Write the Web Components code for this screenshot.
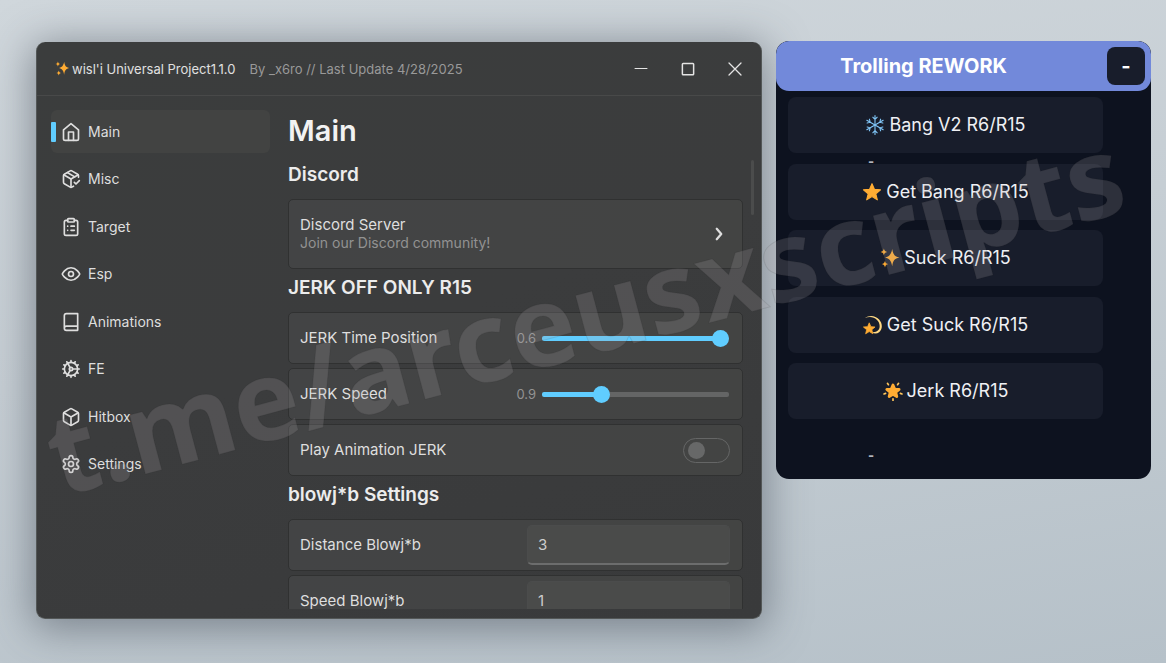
<!DOCTYPE html>
<html lang="en">
<head>
<meta charset="utf-8">
<meta name="viewport" content="width=device-width, initial-scale=1">
<title>wisl'i Universal Project</title>
<style>
html,body{margin:0;min-height:100%}
body{font-family:Inter,"Open Sans",sans-serif;color:#e4e4e4;background:linear-gradient(170deg,#d0d7dc 0%,#c6ced4 45%,#b6c1c9 100%) fixed}
</style>
</head>
<body>
<desk-top></desk-top>
<script>
const BASE='*{box-sizing:border-box}button,input{font:inherit;color:inherit;margin:0}';
const define=(name,render,attach)=>customElements.define(name,class extends HTMLElement{
  connectedCallback(){
    if(this.shadowRoot)return;
    const root=this.attachShadow({mode:'open'});
    root.innerHTML='<style>'+BASE+'</style>'+render(this);
    if(attach)attach(root,this);
  }
});

const LINE={
home:'<path d="m3 9.500 9-7.500 9 7.500V20a2 2 0 0 1-2 2H5a2 2 0 0 1-2-2z"/><path d="M9 22V12h6v10"/>',
package:'<path d="m16 16 2 2 4-4"/><path d="M21 10V8a2 2 0 0 0-1-1.730l-7-4a2 2 0 0 0-2 0l-7 4A2 2 0 0 0 3 8v8a2 2 0 0 0 1 1.730l7 4a2 2 0 0 0 2 0l2-1.140"/><path d="m7.500 4.270 9 5.150"/><path d="M3.290 7 12 12l8.710-5"/><path d="M12 22V12"/>',
clipboard:'<rect x="8" y="2" width="8" height="4" rx="1"/><path d="M16 4h2a2 2 0 0 1 2 2v14a2 2 0 0 1-2 2H6a2 2 0 0 1-2-2V6a2 2 0 0 1 2-2h2"/><path d="M12 11h4M12 16h4M8 11h.01M8 16h.01"/>',
eye:'<path d="M1.500 12s3.700-7.500 10.500-7.500S22.500 12 22.500 12s-3.700 7.500-10.500 7.500S1.500 12 1.500 12Z"/><circle cx="12" cy="12" r="3"/>',
book:'<path d="M4 19.500V4.500A2.500 2.500 0 0 1 6.500 2H20v20H6.500a2.500 2.500 0 0 1 0-5H20"/>',
cog:'<circle cx="12" cy="12" r="8"/><circle cx="12" cy="12" r="2"/><path d="M12 2v2M12 22v-2M17 20.660l-1-1.730M11 10.270 7 3.340M20.660 17l-1.730-1M3.340 7l1.730 1M14 12h8M2 12h2M20.660 7l-1.730 1M3.340 17l1.730-1M17 3.340l-1 1.730M11 13.730l-4 6.930"/>',
box:'<path d="M21 8a2 2 0 0 0-1-1.730l-7-4a2 2 0 0 0-2 0l-7 4A2 2 0 0 0 3 8v8a2 2 0 0 0 1 1.730l7 4a2 2 0 0 0 2 0l7-4A2 2 0 0 0 21 16Z"/><path d="m3.300 7 8.700 5 8.700-5M12 22V12"/>',
settings:'<path d="M12.220 2h-.44a2 2 0 0 0-2 2v.18a2 2 0 0 1-1 1.730l-.43.25a2 2 0 0 1-2 0l-.15-.08a2 2 0 0 0-2.730.73l-.22.38a2 2 0 0 0 .73 2.730l.15.1a2 2 0 0 1 1 1.720v.51a2 2 0 0 1-1 1.740l-.15.09a2 2 0 0 0-.73 2.730l.22.38a2 2 0 0 0 2.730.73l.15-.08a2 2 0 0 1 2 0l.43.25a2 2 0 0 1 1 1.730V20a2 2 0 0 0 2 2h.44a2 2 0 0 0 2-2v-.18a2 2 0 0 1 1-1.730l.43-.25a2 2 0 0 1 2 0l.15.08a2 2 0 0 0 2.730-.73l.22-.39a2 2 0 0 0-.73-2.730l-.15-.08a2 2 0 0 1-1-1.740v-.5a2 2 0 0 1 1-1.740l.15-.09a2 2 0 0 0 .73-2.730l-.22-.38a2 2 0 0 0-2.730-.73l-.15.08a2 2 0 0 1-2 0l-.43-.25a2 2 0 0 1-1-1.730V4a2 2 0 0 0-2-2z"/><circle cx="12" cy="12" r="3"/>',
minus:'<path d="M4 11.300h16"/>',
square:'<rect x="4.500" y="4.500" width="15" height="15" rx="1"/>',
close:'<path d="m4 4 16 16M20 4 4 20"/>',
chevron:'<path d="m9 5 6 7-6 7"/>'
};
define('line-icon',el=>`<style>:host{display:block;flex:none;width:20px;height:20px}svg{display:block;width:100%;height:100%}</style>
<svg viewBox="0 0 24 24" fill="none" stroke="currentColor" stroke-width="${el.getAttribute('weight')||2}" stroke-linecap="round" stroke-linejoin="round" aria-hidden="true">${LINE[el.getAttribute('name')]}</svg>`);

const STAR='m18 3 4.300 10.200 11.100.9-8.500 7.200 2.700 10.800L18 26.300l-9.600 5.800 2.700-10.800-8.500-7.200 11.100-.9z';
const arms=(n)=>Array.from({length:n},(_,i)=>`<use href="#arm" transform="rotate(${i*360/n} 18 18)"/>`).join('');
const EMOJI={
sparkles:'<g fill="#ffac33"><path d="M22 2c1.500 10 4 13 13 15-9 2-11.500 5-13 16-2-11-5-14-13-16 8-2 11-5 13-15Z"/><path d="M7 1c1 4 2 5 6 6-4 1-5 2-6 6C6 9 5 8 1 7c4-1 5-2 6-6ZM9 23c1 4 2 5 6 6-4 1-5 2-6 6-1-4-2-5-6-6 4-1 5-2 6-6Z"/></g>',
snow:`<defs><path id="arm" d="M18 18V1M14 4l4 4 4-4M18 8v3" fill="none" stroke="#7fc4f5" stroke-width="2" stroke-linecap="round"/></defs>${arms(6)}`,
star:`<path fill="#ffac33" stroke="#ffac33" stroke-width="2" stroke-linejoin="round" d="${STAR}"/>`,
dizzy:`<path fill="#ffd983" d="M3 6C12-1 22 1 29 8c7 8 6 18 0 23-4 3-9 3-13 0 8 1 14-3 14-11C30 8 16-1 3 6Z"/><path fill="#ffac33" stroke="#ffac33" stroke-width="2" stroke-linejoin="round" d="${STAR}" transform="translate(-1 12) scale(.68)"/>`,
glow:`<defs><path id="arm" d="M18 4V1" stroke="#ffc65c" stroke-width="3" stroke-linecap="round"/></defs><g transform="rotate(36 18 18)">${arms(5)}</g><path fill="#ffac33" stroke="#ffac33" stroke-width="7" stroke-linejoin="round" d="${STAR}" transform="translate(5 5) scale(.72)"/>`
};
define('emoji-icon',el=>`<style>:host{display:block;flex:none;width:var(--emoji,20px);height:var(--emoji,20px)}svg{display:block;width:100%;height:100%}</style><svg viewBox="0 0 36 36" aria-hidden="true">${EMOJI[el.getAttribute('name')]}</svg>`);

define('nav-item',el=>`<style>:host{display:block}
a{display:flex;align-items:center;gap:7px;height:43px;border-radius:6px;color:#dedede;text-decoration:none;font-size:14px;line-height:20px}
a::before{content:"";width:5px;height:20px;margin-right:-2px;border-radius:1px}
:host([active]) a{background:#424342}:host([active]) a::before{background:#60cdff}</style>
<a href="#"><line-icon name="${el.getAttribute('icon')}"></line-icon><span><slot></slot></span></a>`);

define('title-bar',()=>`<style>:host{box-sizing:border-box;display:flex;align-items:center;height:54px;padding:0 17px 0 18px;border-bottom:1px solid #484949;font-size:13px;line-height:20px;white-space:nowrap;--emoji:15px}
.name{margin-left:2px;color:#e0e0e0}.by{margin-left:14px;color:#999;flex:1}
nav{display:flex;gap:29px}button{width:18px;height:18px;padding:0;border:0;background:none}line-icon{width:18px;height:18px}</style>
<emoji-icon name="sparkles"></emoji-icon><span class="name">wisl'i Universal Project1.1.0</span><span class="by">By _x6ro // Last Update 4/28/2025</span>
<nav><button aria-label="Minimize"><line-icon name="minus" weight="1.4"></line-icon></button><button aria-label="Maximize"><line-icon name="square"></line-icon></button><button aria-label="Close"><line-icon name="close" weight="1.700"></line-icon></button></nav>`);

const CARD=`:host{display:block;margin-bottom:4px}
.card{display:flex;align-items:center;justify-content:space-between;width:100%;height:52px;padding:0 12px 0 11px;border:1px solid #303131;border-radius:5px;background:linear-gradient(90deg,#434445,#434443);font-size:15px;line-height:18px;text-align:left;color:#dedede}`;
define('section-title',()=>`<style>:host{display:block}h2{margin:0;padding:5px 0 10px;font-size:19px;line-height:28px;font-weight:600;color:#ececec}</style><h2><slot></slot></h2>`);
define('link-card',el=>`<style>${CARD}:host{margin-bottom:0}.card{height:70px}small{display:block;font-size:14px;color:#929292}line-icon{width:18px;height:18px;margin-right:2px}</style>
<button class="card"><span><slot></slot><small>${el.getAttribute('note')}</small></span><line-icon name="chevron" weight="3"></line-icon></button>`);
define('slider-card',el=>`<style>${CARD}
.card{padding-right:13px}.control{display:flex;align-items:center;gap:6px;flex:0 0 50%;justify-content:flex-end}output{font-size:13px;color:#939393}
input{appearance:none;width:187px;height:18px;background:none;--p:50%}
input::-webkit-slider-runnable-track{height:5px;border-radius:2px;background:linear-gradient(90deg,#60cdff var(--p),#646565 var(--p))}
input::-webkit-slider-thumb{appearance:none;width:17px;height:17px;margin-top:-6px;border-radius:50%;background:#60cdff}</style>
<div class="card"><label for="r">${el.getAttribute('label')}</label><div class="control"><output for="r">${el.getAttribute('value')}</output><input id="r" type="range" min="0" max="${el.getAttribute('max')}" step="0.01" value="${el.getAttribute('value')}"></div></div>`,
root=>{const input=root.querySelector('input'),out=root.querySelector('output');
const fill=()=>input.style.setProperty('--p',(input.value/input.max*90+5)+'%');
input.addEventListener('input',()=>{out.value=+input.value;fill()});fill()});
define('toggle-card',el=>`<style>${CARD}:host{margin-bottom:0}
input{appearance:none;display:flex;align-items:center;width:47px;height:25px;padding:0 4px;border:1px solid #656666;border-radius:13px}
input::before{content:"";width:17px;height:17px;border-radius:50%;background:#676868}input:checked{justify-content:flex-end}</style>
<div class="card"><label for="t">${el.getAttribute('label')}</label><input id="t" type="checkbox" role="switch"></div>`);
define('field-card',el=>`<style>${CARD}
input{width:203px;height:40px;padding:0 10px;border:1px solid #4b4c4c;border-bottom:2px solid #6c6d6d;border-radius:5px;background:#4a4b4a;color:#cdcdcd}</style>
<div class="card"><label for="f">${el.getAttribute('label')}</label><input id="f" type="text" value="${el.getAttribute('value')}"></div>`);

define('hub-window',()=>`<style>
:host{box-sizing:border-box;display:flex;flex-direction:column;height:calc(100vh - 86px);border:1px solid #535757;border-top:0;border-radius:9px;background:linear-gradient(160deg,#3b3d3d,#3b3c3d 50%,#393a3b);box-shadow:0 6px 40px 4px #3a424d80;overflow:hidden}
.body{flex:1;min-height:0;display:grid;grid-template-columns:219px minmax(0,1fr);column-gap:18px;padding:0 7px 9px 14px}
nav{display:flex;flex-direction:column;justify-content:space-between;height:376px;margin-top:14px}
main{min-height:0;overflow:hidden;padding-right:8px}
h1{margin:15px 0 5px;font-size:29px;line-height:40px;font-weight:600;color:#f2f2f2}
.pane{display:grid;grid-template-columns:minmax(0,1fr) 3px;min-height:0}
.bar{height:55px;margin-top:64px;border-radius:2px;background:#4b4c4c}
</style>
<title-bar></title-bar>
<div class="body"><nav>
<nav-item icon="home" active>Main</nav-item><nav-item icon="package">Misc</nav-item><nav-item icon="clipboard">Target</nav-item><nav-item icon="eye">Esp</nav-item><nav-item icon="book">Animations</nav-item><nav-item icon="cog">FE</nav-item><nav-item icon="box">Hitbox</nav-item><nav-item icon="settings">Settings</nav-item></nav>
<div class="pane"><main><h1>Main</h1>
<section-title>Discord</section-title><link-card note="Join our Discord community!">Discord Server</link-card>
<section-title>JERK OFF ONLY R15</section-title>
<slider-card label="JERK Time Position" value="0.6" max="0.6"></slider-card>
<slider-card label="JERK Speed" value="0.9" max="3"></slider-card>
<toggle-card label="Play Animation JERK"></toggle-card>
<section-title>blowj*b Settings</section-title>
<field-card label="Distance Blowj*b" value="3"></field-card><field-card label="Speed Blowj*b" value="1"></field-card>
</main><div class="bar"></div></div></div>`);

define('action-button',el=>`<style>:host{display:block}button{display:flex;align-items:center;justify-content:center;gap:4px;width:100%;height:56px;padding:0;border:0;border-radius:8px;background:#181d2b;color:#eff0f4;font-size:18px;line-height:24px;font-weight:400;white-space:nowrap}</style>
<button><emoji-icon name="${el.getAttribute('icon')}"></emoji-icon><span><slot></slot></span></button>`);
define('action-panel',()=>`<style>
:host{display:block;height:438px;border-radius:13px;background:#0d121f;overflow:hidden}
header{display:flex;align-items:center;justify-content:space-between;height:50px;padding-right:6px;border-radius:13px;background:#7289da}
h2{flex:0 0 80%;margin:0;text-align:center;font-size:20px;line-height:28px;font-weight:700;color:#fff}
header button{width:38px;height:38px;padding:0;border:0;border-radius:8px;background:#181d2b;color:#fff;font-size:20px;font-weight:700}
.list{position:relative;display:flex;flex-direction:column;justify-content:space-between;width:84%;height:322px;margin:6px 0 0 12px}
.tick{color:#b0b4bd;font-size:13px;line-height:16px;font-weight:800}
.list .tick{position:absolute;left:80px;top:56px}
footer{padding:28px 0 0 92px}
</style>
<header><h2>Trolling REWORK</h2><button aria-label="Collapse">-</button></header>
<div class="list"><action-button icon="snow">Bang V2 R6/R15</action-button><action-button icon="star">Get Bang R6/R15</action-button><action-button icon="sparkles">Suck R6/R15</action-button><action-button icon="dizzy">Get Suck R6/R15</action-button><action-button icon="glow">Jerk R6/R15</action-button><span class="tick">-</span></div>
<footer class="tick">-</footer>`);

define('water-mark',()=>`<style>:host{position:absolute;inset:0;display:flex;align-items:center;justify-content:center;pointer-events:none;overflow:hidden}
span{font:700 112px/150px "Noto Sans","Open Sans",sans-serif;white-space:nowrap;transform:translate(2px,-20px) rotate(-15deg);color:#aaa6aa34;-webkit-text-stroke:1px #2020201c}</style><span>t.me/arceusxscripts</span>`);
define('desk-top',()=>`<style>:host{box-sizing:border-box;position:relative;display:grid;grid-template-columns:minmax(0,726fr) minmax(0,375fr);column-gap:14px;align-items:start;min-height:100vh;padding:41px 15px 0 36px}hub-window{margin-top:1px}</style>
<hub-window></hub-window><action-panel></action-panel><water-mark></water-mark>`);
</script>
</body>
</html>
